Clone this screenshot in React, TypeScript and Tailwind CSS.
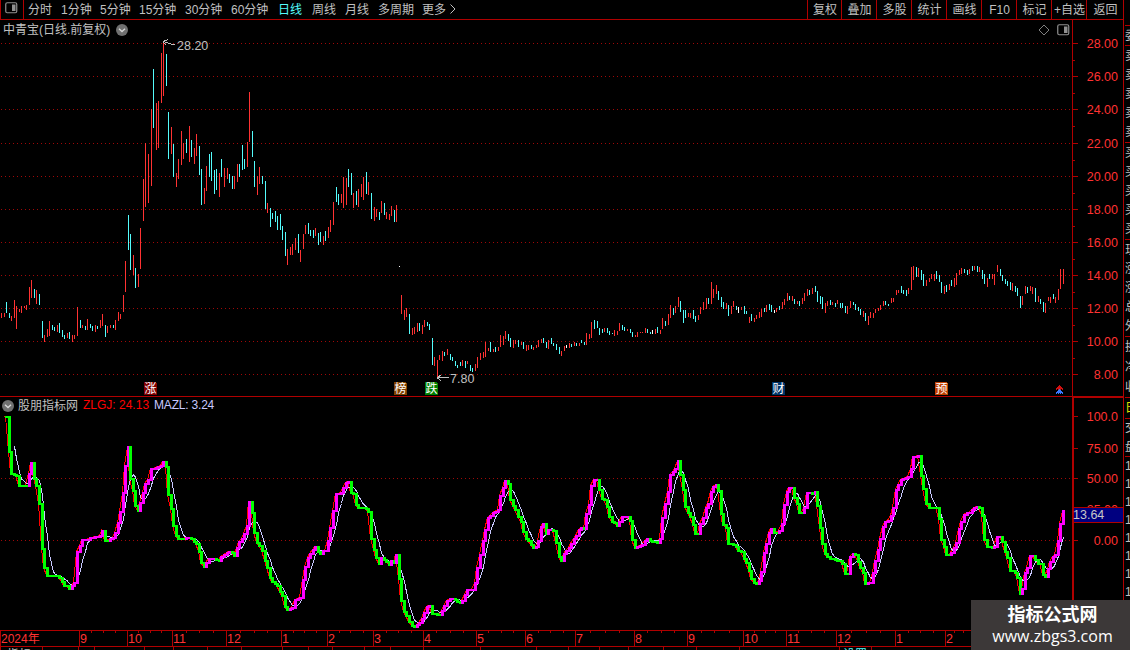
import React from "react";

// kind (u = up, d = down, f = flat), x, high, low
const CANDLES = `
u1 313 318,u4 313 317,d6 302 313,d9 313 318,u11 316 321,u14 300 318,u16 306 329,u19 309 312,u21 306 313,u24 306 308,
u26 305 310,u29 287 305,u31 280 298,d34 289 298,u36 290 304,d39 294 305,d42 321 338,u44 335 342,u47 329 337,u49 321 336,
d52 325 330,d54 327 331,u57 325 332,d59 323 333,d62 330 337,d64 335 339,u67 333 338,d69 332 339,u72 335 342,u74 335 339,
u77 307 336,d80 320 328,u82 325 328,d85 326 330,u87 319 330,d90 324 328,d92 326 331,u95 325 332,d97 326 329,u100 320 328,
u102 314 326,d105 325 337,u107 326 333,u110 325 328,d113 325 328,u115 320 330,u118 312 321,u120 314 319,u123 295 312,
u125 261 292,d128 215 250,d130 234 270,u133 255 275,d135 268 288,u138 274 287,u140 228 269,u143 179 221,u145 143 207,
u148 154 203,u151 109 186,d153 69 128,u156 103 150,u158 101 148,u161 53 103,u163 43 96,d166 54 86,d168 112 159,
u171 127 154,d173 144 177,u176 173 187,u178 159 179,u181 131 165,u183 143 159,d186 139 153,u189 126 162,d191 140 157,
u194 148 164,u196 134 156,d199 146 175,d201 169 205,u204 188 204,u206 166 191,d209 154 177,d211 152 181,d214 170 194,
d216 169 190,u219 173 197,d221 159 177,u224 168 187,u227 168 179,d229 174 183,d232 176 189,u234 176 189,u237 164 182,
d239 164 177,d242 145 170,d244 159 169,u247 142 167,u249 92 142,d252 131 157,d254 161 187,u257 176 195,u259 167 184,
d262 176 184,d265 181 209,u267 203 213,d270 208 227,d272 213 219,d275 211 222,d277 216 230,d280 214 230,d282 226 240,
d285 232 256,u287 249 265,u290 247 255,u292 244 255,u295 238 250,d298 234 253,u300 250 262,u303 234 249,u305 225 234,
d308 223 234,d310 230 236,d313 230 238,u315 228 236,d318 233 245,d320 232 242,u323 236 245,d325 231 241,u328 227 238,
u330 220 232,u333 202 225,d336 187 202,d338 194 205,u341 194 203,u343 177 208,u346 178 205,d348 169 187,d351 173 195,
u353 193 208,d356 191 205,u358 189 207,u361 184 197,u363 177 200,d366 172 194,u368 182 195,d371 193 219,u374 207 221,
u376 209 217,d379 212 220,u381 201 213,d384 203 215,u386 212 219,u389 214 220,u391 206 216,d394 210 222,u396 205 222,
f399 266 267,u401 295 314,u404 310 320,u406 308 317,d409 314 334,u412 328 335,u414 327 334,u417 323 332,d419 323 331,
u422 325 334,u424 320 327,d427 322 326,d429 324 330,d432 338 365,u434 357 366,u437 360 377,u439 355 360,u442 351 361,
d444 352 356,u447 349 355,d450 354 360,d452 357 361,d455 361 366,d457 365 368,d460 362 366,u462 360 366,d465 361 368,
u467 361 364,d470 365 371,d472 368 372,u475 364 371,u477 357 368,u480 353 360,u483 352 358,u485 342 357,u488 348 351,
d490 342 352,u493 349 352,d495 347 352,u498 347 351,u500 335 347,u503 336 345,u505 331 339,d508 334 341,d510 338 347,
u513 340 348,u515 340 344,d518 340 347,u521 342 345,d523 342 349,u526 345 351,u528 345 350,d531 345 349,u533 347 350,
u536 345 348,u538 340 347,u541 339 343,d543 338 343,d546 342 348,u548 340 349,d551 338 344,d553 343 346,d556 344 350,
d559 347 354,u561 351 356,u564 346 351,f566 345 348,u569 343 348,d571 344 347,u574 342 346,d576 343 346,u579 343 346,
d581 340 343,d584 342 345,u586 333 345,u589 334 339,u591 322 338,d594 320 329,d597 321 328,d599 328 335,d602 329 333,
u604 328 332,d607 328 333,d609 331 335,d612 333 334,u614 330 336,u617 331 335,u619 323 331,d622 325 330,d624 327 331,
u627 329 331,d630 329 333,d632 332 337,u635 335 337,u637 332 337,u640 332 333,u642 332 333,u645 328 333,d647 329 333,
d650 332 334,f652 330 334,u655 329 334,d657 327 333,u660 330 334,u662 318 329,d665 321 326,u668 314 325,u670 305 318,
d673 308 315,u675 306 313,u678 297 307,d680 301 312,d683 310 323,d685 310 318,u688 313 317,u690 313 318,d693 310 319,
d695 316 322,u698 315 320,u700 307 314,u703 302 310,u706 298 309,d708 298 304,u711 282 304,u713 289 298,u716 285 294,
d718 291 300,d721 297 307,d723 302 309,u726 303 309,d728 305 316,u731 306 314,u733 301 307,d736 306 310,f738 307 313,
u741 307 310,d744 306 314,d746 311 314,u749 317 323,d751 314 321,u754 318 322,u756 315 319,u759 312 318,u761 309 317,
d764 308 312,u766 305 312,d769 304 310,d771 305 312,f774 310 313,u776 308 312,d779 306 310,u782 302 309,u784 299 305,
u787 293 301,d789 296 300,u792 296 301,d794 299 304,u797 301 304,d799 301 306,u802 298 304,u804 293 301,u807 289 296,
d809 290 295,u812 288 294,d815 286 292,d817 291 302,d820 296 304,d822 297 309,u825 303 313,u827 301 306,d830 300 305,
u832 302 305,d835 303 307,u837 300 304,d840 303 308,d842 303 308,d845 306 313,u847 306 314,u850 301 308,d853 302 305,
d855 304 310,d858 307 311,d860 309 315,u863 311 317,d865 313 321,u868 316 325,u870 312 318,u873 313 318,u875 309 313,
u878 308 311,u880 305 310,u883 301 306,d885 301 305,d888 304 306,u891 298 303,u893 298 302,u896 290 295,u898 290 293,
d901 286 293,d903 290 294,d906 290 296,u908 288 294,u911 267 290,u913 266 280,d916 267 277,u918 268 277,d921 270 280,
d923 274 286,u926 280 286,u929 278 282,u931 274 279,u934 274 281,d936 271 279,d939 275 282,d941 282 293,u944 286 294,
d946 285 292,u949 284 290,d951 280 286,u954 278 287,u956 273 285,u959 270 275,u961 268 274,d964 269 273,d967 270 275,
u969 269 274,d972 266 271,u974 266 270,d977 266 272,u979 267 272,d982 270 279,d984 274 284,u987 278 287,d989 274 279,
u992 274 279,u994 274 285,u997 265 272,d1000 269 276,d1002 275 281,d1005 279 284,d1007 281 286,d1010 282 290,
u1012 283 291,d1015 286 292,d1017 288 296,d1020 296 308,u1022 296 305,u1025 286 294,d1027 287 293,u1030 286 291,
u1032 287 294,d1035 288 302,u1038 296 302,d1040 299 304,d1043 302 312,u1045 303 313,u1048 297 301,u1050 297 303,
d1053 294 299,u1055 297 303,u1058 289 300,u1060 269 289,u1063 269 284`
    .trim()
    .split(",")
    .map((item) => {
        const row = item.trim();
        const [x, high, low] = row.slice(1).split(" ").map(Number);
        return { kind: row[0], x, high, low };
    });

// turning points of the ZLGJ line
const ZLGJ = `
4 416,6 416,9 451,11 473,16 475,19 485,27 485,29 473,31 462,34 478,36 485,39 503,42 548,44 567,47 575,57 575,59 577,62 581,
64 585,67 585,69 588,72 585,74 582,77 551,80 545,82 539,87 539,90 537,97 536,100 535,102 530,105 540,107 540,110 538,113 537,
115 532,118 522,120 511,123 492,125 465,128 446,130 478,133 490,135 505,138 510,140 502,143 492,145 483,148 479,151 468,
156 467,161 465,163 461,165 456,166 466,168 494,171 508,173 525,176 535,178 538,190 537,194 541,196 543,199 551,201 562,
204 566,206 562,209 558,215 558,218 562,220 557,225 553,228 551,231 551,234 555,236 551,238 542,241 540,244 533,246 529,
248 520,249 501,252 512,254 532,257 542,260 546,262 550,265 560,267 567,270 577,272 581,277 585,280 591,283 597,285 606,
288 611,290 608,293 606,295 599,298 598,301 596,303 579,305 566,308 557,310 553,313 549,315 546,318 551,320 553,323 550,
326 550,328 540,330 527,333 510,336 493,341 492,343 487,346 482,349 480,351 492,354 494,356 504,358 507,365 507,368 511,
370 515,371 538,374 549,376 557,379 563,381 557,384 559,387 562,389 564,391 560,394 562,396 554,399 578,401 600,404 611,
406 615,409 621,412 625,415 626,418 623,421 621,424 612,427 606,430 604,432 613,435 613,438 615,441 612,444 605,447 600,
450 598,454 598,457 601,461 602,464 597,467 589,472 589,475 582,477 567,480 554,483 540,485 529,488 517,490 515,493 512,
498 509,500 495,503 487,505 480,508 483,510 499,513 505,515 509,518 516,521 521,523 531,526 538,528 540,531 544,534 548,
537 545,539 535,541 526,544 522,546 533,549 527,553 530,556 542,559 556,561 560,564 553,566 550,569 547,571 543,574 538,
577 533,580 527,585 528,586 513,589 504,591 485,594 479,597 479,599 489,602 498,606 500,607 506,609 516,612 521,615 523,
618 526,620 516,628 516,630 520,632 539,635 547,640 545,644 543,646 537,649 539,653 541,658 542,661 536,662 517,665 503,
668 491,670 474,673 471,676 467,678 460,680 474,683 489,685 506,688 512,690 516,693 524,695 533,698 533,700 523,703 517,
707 504,710 501,711 491,714 484,717 484,719 495,721 513,723 524,726 527,728 543,735 544,738 550,743 551,744 558,747 564,
749 570,751 578,754 582,757 583,760 578,762 563,764 552,767 538,769 532,771 528,773 532,778 532,781 527,783 518,784 504,
787 491,789 487,792 487,794 497,797 503,799 512,803 512,805 502,807 492,812 493,815 491,817 505,819 519,822 543,825 553,
827 556,831 558,837 560,840 560,843 565,846 577,848 568,850 556,853 553,856 555,858 561,860 567,863 572,865 583,869 582,
872 581,874 563,877 554,880 538,883 526,885 521,890 519,892 511,894 502,896 489,899 481,902 478,906 477,909 475,912 464,
913 456,919 455,921 475,924 495,926 503,929 507,937 507,939 518,941 539,944 546,946 554,950 554,952 550,955 546,957 538,
959 528,962 518,965 512,970 512,972 509,976 505,979 507,981 507,983 522,984 539,987 546,993 547,995 544,997 536,1001 536,
1003 546,1006 553,1008 560,1010 570,1014 569,1016 574,1018 580,1020 593,1023 586,1025 572,1028 565,1030 555,1034 555,
1036 562,1040 563,1042 570,1044 577,1046 575,1049 564,1051 558,1054 555,1056 552,1058 540,1060 523,1063 510`
    .trim()
    .split(",")
    .map((item) => item.trim().split(" ").map(Number));

function zlgjAt(x: number) {
    const next = ZLGJ.findIndex(([px]) => px >= x);
    if (next <= 0) return ZLGJ[0][1];
    const [x0, y0] = ZLGJ[next - 1];
    const [x1, y1] = ZLGJ[next];
    return Math.round(y0 + ((y1 - y0) * (x - x0)) / (x1 - x0));
}

const series = CANDLES.filter(({ x }) => x >= 4).map(({ x }) => ({
    x,
    y: zlgjAt(x),
}));

// MAZL is the five bar average of ZLGJ
const average = series.slice(4).map(({ x }, i) => ({
    x,
    y: series.slice(i, i + 5).reduce((sum, point) => sum + point.y, 0) / 5,
}));

const candleColors: Record<string, string> = {
    u: "#ff3232",
    d: "#54fcfc",
    f: "#ffffff",
};

const periods = [
    { name: "分时", width: "w-[33px]" },
    { name: "1分钟", width: "w-[39px]" },
    { name: "5分钟", width: "w-[39px]" },
    { name: "15分钟", width: "w-[46px]" },
    { name: "30分钟", width: "w-[46px]" },
    { name: "60分钟", width: "w-[47px]" },
    { name: "日线", width: "w-[34px]" },
    { name: "周线", width: "w-[33px]" },
    { name: "月线", width: "w-[33px]" },
    { name: "多周期", width: "w-[44px]" },
    { name: "更多", width: "w-[27px]" },
];

const tools = [
    { name: "复权", width: "w-[34px]" },
    { name: "叠加", width: "w-[35px]" },
    { name: "多股", width: "w-[35px]" },
    { name: "统计", width: "w-[35px]" },
    { name: "画线", width: "w-[35px]" },
    { name: "F10", width: "w-[35px]" },
    { name: "标记", width: "w-[35px]" },
    { name: "+自选", width: "w-[35px]" },
    { name: "返回", width: "w-[37px]" },
];

const prices = [43, 76, 109, 143, 176, 209, 242, 275, 308, 341, 374].map(
    (y, i) => ({ y, label: (28 - i * 2).toFixed(2) }),
);

const levels = [
    { y: 416, label: "100.0" },
    { y: 448, label: "75.00" },
    { y: 478, label: "50.00" },
    { y: 509, label: "25.00" },
    { y: 540, label: "0.00" },
];

const events = [
    { x: 144, text: "涨", color: "#7f0000" },
    { x: 394, text: "榜", color: "#804000" },
    { x: 425, text: "跌", color: "#008000" },
    { x: 772, text: "财", color: "#003468" },
    { x: 935, text: "预", color: "#c04000" },
];

const months = [
    { x: 79, label: "9" },
    { x: 127, label: "10" },
    { x: 172, label: "11" },
    { x: 226, label: "12" },
    { x: 281, label: "1" },
    { x: 327, label: "2" },
    { x: 373, label: "3" },
    { x: 423, label: "4" },
    { x: 476, label: "5" },
    { x: 525, label: "6" },
    { x: 575, label: "7" },
    { x: 634, label: "8" },
    { x: 687, label: "9" },
    { x: 743, label: "10" },
    { x: 786, label: "11" },
    { x: 836, label: "12" },
    { x: 895, label: "1" },
    { x: 945, label: "2" },
];

const weekTicks = [
    91, 103, 115, 138, 150, 161, 186, 199, 213, 240, 254, 267, 293, 304, 316,
    339, 350, 363, 386, 398, 411, 436, 450, 463, 488, 501, 513, 538, 550, 563,
    590, 605, 619, 647, 661, 674, 701, 714, 729, 754, 765, 775, 798, 811, 824,
    851, 866, 880, 908, 920, 933, 954, 963,
];

const tabTicks = [
    0, 42, 78, 94, 144, 173, 207, 241, 282, 308, 332, 364, 390, 423, 480, 536,
    568, 599, 628, 663, 696, 739, 839, 871,
];

// the quote panel is cut off by the window edge
const quoteRows = [
    { height: "h-[6px]", text: "" },
    { height: "h-[20px]", text: "委" },
    { height: "h-[97px]", text: "卖卖卖卖卖" },
    { height: "h-[97px]", text: "买买买买买" },
    { height: "h-[97px]", text: "现涨涨总外" },
    { height: "h-[61px]", text: "换净收" },
];

function PanelIcon({ className }: { className: string }) {
    return (
        <svg className={className} width="13" height="12" viewBox="0 0 13 12">
            <rect
                x="0.75"
                y="0.75"
                width="11"
                height="10"
                rx="1.5"
                fill="none"
                stroke="currentColor"
                strokeWidth="1.2"
            />
            <rect x="7" y="2.5" width="3.5" height="6.5" fill="currentColor" />
        </svg>
    );
}

function DropIcon() {
    return (
        <svg width="12" height="12" viewBox="0 0 12 12">
            <circle cx="6" cy="6" r="6" fill="#707070" />
            <path
                d="M3 4.8L6 7.6L9 4.8"
                fill="none"
                stroke="#d8d8d8"
                strokeWidth="1.3"
            />
        </svg>
    );
}

function GridLine({ y }: { y: number }) {
    return (
        <line
            x1="1"
            x2="1072"
            y1={y + 0.5}
            y2={y + 0.5}
            stroke="#a00808"
            strokeDasharray="1 3"
        />
    );
}

function Toolbar() {
    return (
        <div className="flex h-5 w-[1124px] shrink-0 justify-between border-r border-b border-[#b00000] leading-5">
            <div className="flex">
                <div className="mr-1 flex w-6 items-center border-x border-[#b00000] pb-[3px] pl-1">
                    <PanelIcon className="text-[#909090]" />
                </div>
                {periods.map(({ name, width }) => (
                    <div
                        key={name}
                        className={
                            width +
                            " shrink-0 whitespace-nowrap" +
                            (name === "日线" ? " text-[#54fcfc]" : "")
                        }
                    >
                        {name}
                    </div>
                ))}
                <svg className="mt-1" width="8" height="10" viewBox="0 0 8 10">
                    <path d="M1.5 0.5L6 5L1.5 9.5" fill="none" stroke="#c0c0c0" />
                </svg>
            </div>
            <div className="flex">
                {tools.map(({ name, width }) => (
                    <div
                        key={name}
                        className={
                            width +
                            " shrink-0 border-l border-[#b00000] pl-px text-center whitespace-nowrap"
                        }
                    >
                        {name}
                    </div>
                ))}
            </div>
        </div>
    );
}

function PriceChart() {
    return (
        <div className="relative h-[377px]">
            <svg
                width="1123"
                height="377"
                viewBox="0 20 1123 377"
                shapeRendering="crispEdges"
            >
                {prices.map(({ y, label }) => (
                    <g key={label}>
                        <GridLine y={y} />
                        <rect x="1073" y={y} width="5" height="1" fill="#b00000" />
                        {y < 374 && (
                            <rect
                                x="1073"
                                y={y + 17}
                                width="2"
                                height="1"
                                fill="#b00000"
                            />
                        )}
                        <text
                            x="1118"
                            y={y + 5}
                            textAnchor="end"
                            fill="#ff3232"
                            fontSize="12.5"
                        >
                            {label}
                        </text>
                    </g>
                ))}
                {CANDLES.map(({ kind, x, high, low }) => (
                    <rect
                        key={x}
                        x={x}
                        y={high}
                        width="1"
                        height={low - high}
                        fill={candleColors[kind]}
                    />
                ))}
                <path
                    d="M163 41.5L174.5 45M163 41.5L168 39.5M163 41.5L166 45"
                    stroke="#c0c0c0"
                    fill="none"
                />
                <text x="177" y="50" fill="#c0c0c0" fontSize="12.5">
                    28.20
                </text>
                <path
                    d="M437 377.5H449M437 377.5L441 375M437 377.5L441 381"
                    stroke="#c0c0c0"
                    fill="none"
                />
                <text x="450" y="383" fill="#c0c0c0" fontSize="12.5">
                    7.80
                </text>
                {events.map(({ x, text, color }) => (
                    <g key={text}>
                        <path
                            d={`M${x} 382h11l2 2v11h-13z`}
                            fill={color}
                        />
                        <text x={x + 0.5} y="393" fill="#ffffff" fontSize="12">
                            {text}
                        </text>
                    </g>
                ))}
                <path
                    d="M1056 389.5L1059.5 386L1063 389.5M1058 389.5L1059.5 388L1061 389.5"
                    stroke="#d01010"
                    fill="none"
                />
                <path
                    d="M1056 393.5L1059.5 390L1063 393.5M1058 393.5L1059.5 392L1061 393.5"
                    stroke="#3878ff"
                    fill="none"
                />
                <rect x="1072" y="20" width="1" height="377" fill="#b00000" />
                <rect x="0" y="396" width="1123" height="1" fill="#b00000" />
            </svg>
            <div className="absolute top-0 left-[3px] flex h-[19px] items-center gap-[6px] whitespace-nowrap">
                <span>中青宝(日线.前复权)</span>
                <DropIcon />
            </div>
            <div className="absolute top-1 right-[53px] flex items-center gap-[7px]">
                <svg width="12" height="12" viewBox="0 0 12 12">
                    <path
                        d="M6 1L11 6L6 11L1 6Z"
                        fill="none"
                        stroke="#808080"
                    />
                </svg>
                <PanelIcon className="text-[#909090]" />
            </div>
        </div>
    );
}

function IndicatorChart() {
    // a level bar keeps the colour of the move before it
    let color = "#00ff00";
    const steps = series.slice(1).map(({ x, y }, i) => {
        const last = series[i].y;
        if (y !== last) color = y < last ? "#ff00ff" : "#00ff00";
        return {
            x,
            color,
            top: Math.min(last, y),
            height: Math.abs(y - last) + 2,
        };
    });

    return (
        <div className="relative h-[233px]">
            <svg
                width="1123"
                height="233"
                viewBox="0 397 1123 233"
                shapeRendering="crispEdges"
            >
                <GridLine y={478} />
                <GridLine y={540} />
                <path
                    d={
                        "M" +
                        series.map(({ x, y }) => `${x - 0.5} ${y + 0.5}`).join("L")
                    }
                    stroke="#ff0000"
                    fill="none"
                />
                <path
                    d={
                        "M" +
                        average.map(({ x, y }) => `${x + 0.5} ${y + 0.5}`).join("L")
                    }
                    stroke="#c8c8ff"
                    fill="none"
                />
                {steps.map((step) => (
                    <rect
                        key={step.x}
                        x={step.x - 1}
                        y={step.top}
                        width="3"
                        height={step.height}
                        fill={step.color}
                    />
                ))}
                {levels.map(({ y, label }) => (
                    <g key={label}>
                        <rect x="1074" y={y} width="4" height="1" fill="#b00000" />
                        <text
                            x="1118"
                            y={y + 5}
                            textAnchor="end"
                            fill="#ff3232"
                            fontSize="12.5"
                        >
                            {label}
                        </text>
                    </g>
                ))}
                <rect x="1072" y="397" width="2" height="233" fill="#b00000" />
                <rect x="1072" y="397" width="51" height="1" fill="#b00000" />
                <rect
                    x="1073.5"
                    y="507.5"
                    width="50"
                    height="15"
                    fill="#000080"
                    stroke="#b00000"
                />
                <text x="1073" y="519" fill="#c8c8c8" fontSize="12.5">
                    13.64
                </text>
            </svg>
            <div className="absolute top-0 left-[2px] flex h-[17px] items-center whitespace-nowrap">
                <DropIcon />
                <span className="ml-1">股朋指标网</span>
                <span className="ml-[5px] font-['Liberation_Sans'] leading-[15px] text-[#ff0000]">
                    ZLGJ: 24.13
                </span>
                <span className="ml-[5px] font-['Liberation_Sans'] leading-[15px] tracking-[-0.2px] text-[#c8c8ff]">
                    MAZL: 3.24
                </span>
            </div>
        </div>
    );
}

function TimeAxis() {
    return (
        <svg
            width="1123"
            height="20"
            viewBox="0 630 1123 20"
            shapeRendering="crispEdges"
        >
            <rect x="0" y="630" width="1123" height="1" fill="#b00000" />
            <rect x="0" y="646" width="1123" height="1" fill="#b00000" />
            <rect x="0" y="630" width="1" height="17" fill="#b00000" />
            <text x="1" y="643" fill="#ff3232" fontSize="12">
                2024年
            </text>
            {months.map(({ x, label }) => (
                <g key={x}>
                    <rect x={x} y="630" width="1" height="17" fill="#b00000" />
                    <text x={x + 1} y="643" fill="#ff3232" fontSize="12.5">
                        {label}
                    </text>
                </g>
            ))}
            {weekTicks.map((x) => (
                <rect key={x} x={x} y="631" width="1" height="2" fill="#b00000" />
            ))}
            {tabTicks.map((x) => (
                <rect key={x} x={x} y="647" width="1" height="3" fill="#b00000" />
            ))}
            <text x="7" y="659" fill="#c0c0c0" fontSize="12">
                指标
            </text>
            <text x="843" y="659" fill="#54fcfc" fontSize="12">
                设置
            </text>
        </svg>
    );
}

function QuoteStrip() {
    return (
        <div className="w-[7px] shrink-0 overflow-hidden border-l border-[#b00000] pl-px">
            {quoteRows.map(({ height, text }, i) => (
                <div
                    key={i}
                    className={
                        height +
                        " flex w-3 flex-col justify-around border-b border-[#b00000] leading-3"
                    }
                >
                    {text.split("").map((char, j) => (
                        <span key={j}>{char}</span>
                    ))}
                </div>
            ))}
            <div className="h-[21px] w-3 border-b border-[#b00000] leading-5 text-[#e0e000]">
                日
            </div>
            <div className="flex h-[38px] w-3 flex-col justify-around border-b border-[#b00000] leading-3">
                <span>交</span>
                <span>盘</span>
            </div>
            {Array.from({ length: 10 }, (_, i) => (
                <div key={i} className="h-[18px] leading-[18px]">
                    1
                </div>
            ))}
        </div>
    );
}

export default function App() {
    return (
        <div className="relative flex h-[650px] w-[1130px] flex-col overflow-hidden bg-black font-['Liberation_Sans','Noto_Sans_CJK_SC',sans-serif] text-[12px] text-[#c0c0c0]">
            <Toolbar />
            <div className="flex h-[630px]">
                <div className="flex w-[1123px] shrink-0 flex-col">
                    <PriceChart />
                    <IndicatorChart />
                    <TimeAxis />
                </div>
                <QuoteStrip />
            </div>
            <div className="absolute right-0 bottom-0 flex h-[50px] w-[159px] flex-col items-center justify-center bg-[#3c3838] pl-1 text-white">
                <span className="text-[18px] leading-[22px] font-bold">
                    指标公式网
                </span>
                <span className="font-['Open_Sans'] text-[16px] leading-[20px]">
                    www.zbgs3.com
                </span>
            </div>
        </div>
    );
}
